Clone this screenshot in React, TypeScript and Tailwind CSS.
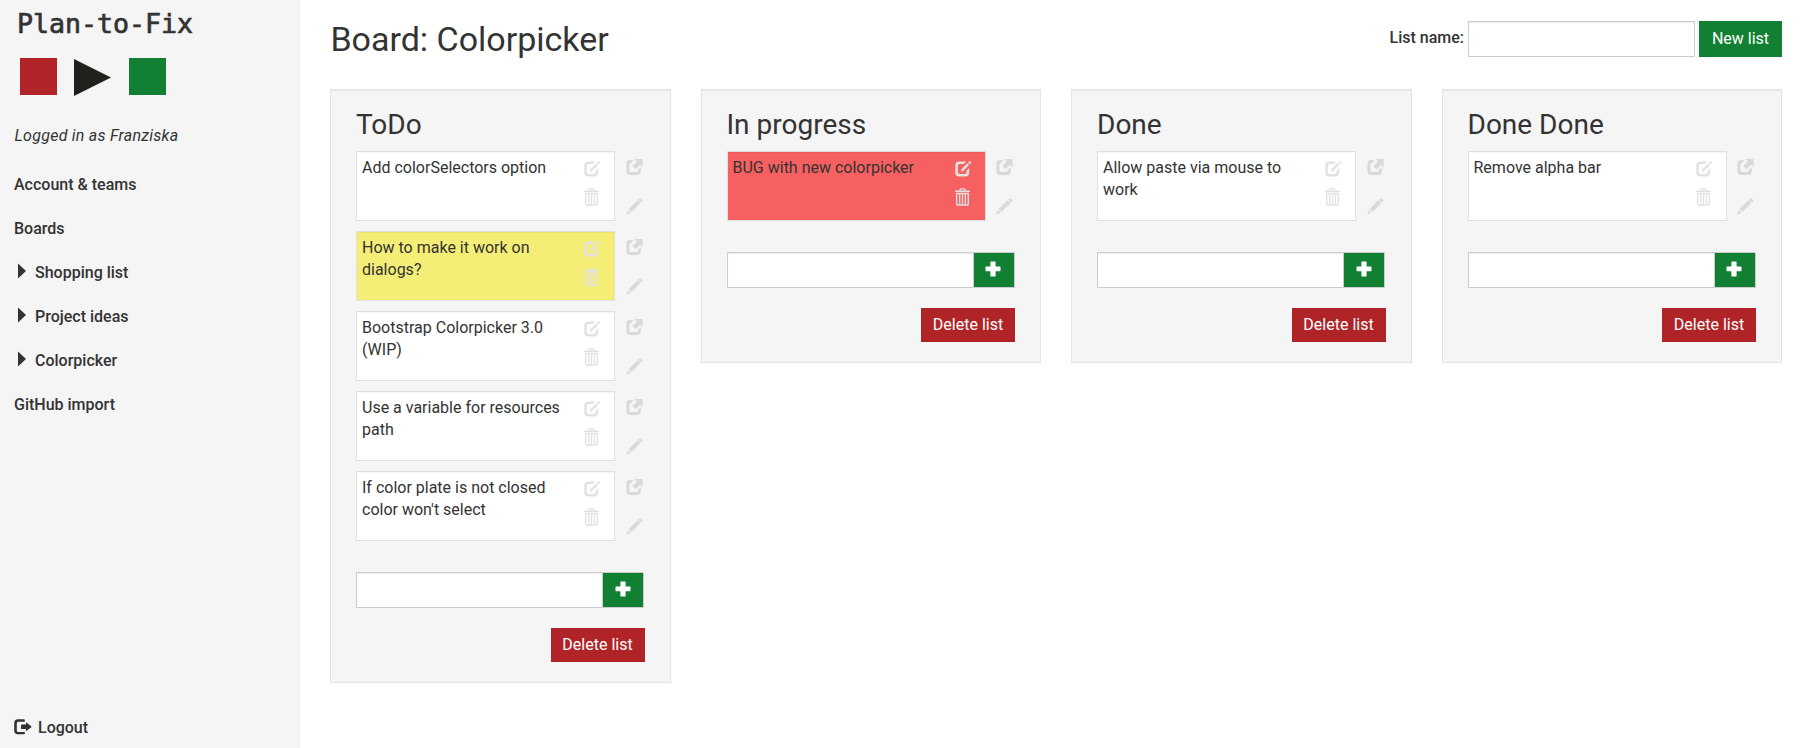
import React from "react";

type Card = { text: string; tone?: "yellow" | "red" };
type List = { title: string; cards: Card[] };

const lists: List[] = [
  {
    title: "ToDo",
    cards: [
      { text: "Add colorSelectors option" },
      { text: "How to make it work on dialogs?", tone: "yellow" },
      { text: "Bootstrap Colorpicker 3.0 (WIP)" },
      { text: "Use a variable for resources path" },
      { text: "If color plate is not closed color won't select" },
    ],
  },
  { title: "In progress", cards: [{ text: "BUG with new colorpicker", tone: "red" }] },
  { title: "Done", cards: [{ text: "Allow paste via mouse to work" }] },
  { title: "Done Done", cards: [{ text: "Remove alpha bar" }] },
];

const tones = {
  plain: "bg-white",
  yellow: "bg-[#f5ee76]",
  red: "bg-[#f66060]",
};

function EditIcon() {
  return (
    <svg width="17" height="16" viewBox="0 0 17 16" fill="currentColor">
      <path d="M4 0.5H11L8.8 3.1H4.8Q2.9 3.1 2.9 5V11Q2.9 12.9 4.8 12.9H9.8Q11.7 12.9 11.7 11V9.6L14.2 7.1V11.7Q14.2 15.4 10.6 15.4H4Q0.3 15.4 0.3 11.7V4.2Q0.3 0.5 4 0.5Z" />
      <path d="M12.2 2.2L14.1 4.1L8.5 9.8L5.7 10.8L6.7 8ZM14.3 0.4Q14.8 0 15.3 0.4L16.1 1.2Q16.5 1.7 16.1 2.2L14.9 3.3L13 1.5Z" />
    </svg>
  );
}

function TrashIcon() {
  return (
    <svg width="15" height="18" viewBox="0 0 15 18" fill="none" stroke="currentColor">
      <path d="M5 2.8V1.5Q5 0.9 5.6 0.9H9.4Q10 0.9 10 1.5V2.8" strokeWidth="1.2" />
      <path d="M0 4V3.3Q0 2.4 1 2.4H14Q15 2.4 15 3.3V4Z" fill="currentColor" stroke="none" />
      <path d="M1.7 5.5H13.3V16.3Q13.3 17 12.6 17H2.4Q1.7 17 1.7 16.3Z" strokeWidth="1.4" />
      <path d="M4.7 6V16.5M7.5 6V16.5M10.3 6V16.5" strokeWidth="1.3" />
    </svg>
  );
}

function ShareIcon() {
  return (
    <svg width="17" height="17" viewBox="0 0 17 17" fill="currentColor">
      <path d="M4.3 1H7.4L5.2 3.9Q3.4 4 3.4 5.8V11.2Q3.4 13 5.2 13H10Q11.8 13 11.8 11.2V10.7L14.8 8.3V12.3Q14.8 16 11.1 16H4.2Q0.4 16 0.4 12.3V4.8Q0.4 1 4.3 1Z" />
      <path d="M8.3 0H16.6V8.2L14.1 5.7L9.5 10.3L6.3 7.1L10.9 2.5Z" />
    </svg>
  );
}

function PencilIcon() {
  return (
    <svg width="17" height="17" viewBox="0 0 17 17" fill="currentColor">
      <path d="M13.3 0.4Q13.9 -0.1 14.5 0.4L16.2 2.1Q16.7 2.7 16.2 3.3L14.9 4.6L12 1.7ZM11.3 2.3L14.3 5.3L5.5 14.1L2.5 11.1ZM1.8 12L4.6 14.8L0.2 16.5Z" />
    </svg>
  );
}

function PlusIcon() {
  return (
    <svg width="16" height="16" viewBox="0 0 16 16" fill="currentColor">
      <path d="M6 .5h4q.6 0 .6.6V5.4h4.3q.6 0 .6.6v3.6q0 .6-.6.6h-4.3v4.7q0 .6-.6.6H6q-.6 0-.6-.6v-4.7H1.100q-.6 0-.6-.6V6q0-.6.6-.6h4.3V1.100q0-.6.6-.6Z" />
    </svg>
  );
}

function LogoutIcon() {
  return (
    <svg width="18" height="16" viewBox="0 0 18 16" fill="currentColor">
      <path d="M4 .2h6q.8 0 .8.8V2.7H4.3q-1.5 0-1.5 1.5v7.2q0 1.5 1.5 1.5h6.500v1.600q0 .8-.8.8H4Q.2 15.300.2 11.500V4Q.2.2 4 .2Z" />
      <path d="M12 3.3L17.3 7.3Q17.7 7.75 17.3 8.2L12 12.2V9.9H7.5Q7 9.9 7 9.4V6.1Q7 5.6 7.5 5.6H12Z" />
    </svg>
  );
}

function TaskCard({ card }: { card: Card }) {
  return (
    <div className="flex h-[70px] justify-between">
      <div
        className={`flex min-w-0 flex-1 justify-between border border-[#e0e0e0] pr-[13px] pl-[5px] shadow-[inset_0_1px_1px_rgba(0,0,0,0.05)] ${tones[card.tone ?? "plain"]}`}
      >
        <p className="w-[202px] pt-[5px] leading-[22px]">{card.text}</p>
        <div className="flex w-[17px] shrink-0 flex-col gap-[11px] pt-[9px] text-[#e2e2e2]">
          <EditIcon />
          <TrashIcon />
        </div>
      </div>
      <div className="flex w-[29.5px] shrink-0 flex-col gap-[22px] pt-2 pl-[10.9px] text-[#d9d9d9]">
        <ShareIcon />
        <PencilIcon />
      </div>
    </div>
  );
}

function Column({ list }: { list: List }) {
  return (
    <section className="border border-[#e3e3e3] bg-[#f5f5f5] px-[25px] pb-5 shadow-[inset_0_1px_1px_rgba(0,0,0,0.05)]">
      <h2 className="pt-[19px] text-[28px] leading-[31px]">{list.title}</h2>
      <div className="mt-[11px] flex flex-col gap-[10px]">
        {list.cards.map((card) => (
          <TaskCard key={card.text} card={card} />
        ))}
      </div>
      <div className="mt-[31px] flex h-9 w-72 border border-[#ccc]">
        <input
          aria-label={list.title}
          className="min-w-0 flex-1 bg-white px-3 shadow-[inset_0_1px_1px_rgba(0,0,0,0.075)] outline-none"
        />
        <button className="flex w-[41px] justify-center border-l border-[#ccc] bg-[#118033] pt-2 pr-px text-white">
          <PlusIcon />
        </button>
      </div>
      <div className="mt-5 flex justify-end">
        <button className="h-[34px] w-[94px] bg-[#b02427] pb-px text-white">Delete list</button>
      </div>
    </section>
  );
}

function Sidebar() {
  return (
    <aside className="flex w-[300px] shrink-0 flex-col border-r border-[#eee] bg-[#f5f5f5]">
      <div className="pt-2 pl-[17px] font-['DejaVu_Sans_Mono',monospace] text-[26.6px] leading-[31px] [-webkit-text-stroke:0.7px_#333]">
        Plan-to-Fix
      </div>
      <div className="mt-[19px] flex pl-5">
        <div className="size-[37px] bg-[#b02427]" />
        <svg className="ml-[17px]" width="37" height="38" viewBox="0 0 37 38">
          <path d="M0 1L37 19.5L0 38Z" fill="#20201c" />
        </svg>
        <div className="ml-[18px] size-[37px] bg-[#118033]" />
      </div>
      <p className="mt-[28px] pl-[14.5px] leading-[23px] tracking-[0.25px] italic">Logged in as Franziska</p>
      <nav className="mt-4 flex flex-col pl-[14px] font-medium">
        <a className="h-11 leading-[44px]">Account &amp; teams</a>
        <a className="h-11 leading-[44px]">Boards</a>
        {["Shopping list", "Project ideas", "Colorpicker"].map((name) => (
          <a key={name} className="flex h-11 pl-1 leading-[44px]">
            <svg className="mt-3 mr-[9px]" width="8" height="16" viewBox="0 0 8 16">
              <path d="M0 .5L8 8L0 15.5Z" fill="#333" />
            </svg>
            {name}
          </a>
        ))}
        <a className="h-11 leading-[44px]">GitHub import</a>
      </nav>
      <a className="mt-auto flex items-start pb-[9px] pl-[14px] leading-[23px] font-medium">
        <span className="mt-[3px] mr-[6px]">
          <LogoutIcon />
        </span>
        Logout
      </a>
    </aside>
  );
}

export default function App() {
  return (
    <div className="flex h-[748px] w-full overflow-hidden bg-white font-['Roboto',sans-serif] text-base text-[#333]">
      <Sidebar />
      <main className="min-w-0 flex-1 pr-6 pl-[30px]">
        <header className="flex h-[89px] justify-between">
          <h1 className="pt-5 pl-[0.4px] text-[34px] leading-[38px]">Board: Colorpicker</h1>
          <form className="flex h-9 items-start pt-[21px]">
            <label htmlFor="list-name" className="mr-1 pt-[5px] leading-[23px] font-medium">
              List name:
            </label>
            <input
              id="list-name"
              className="mr-1 h-9 w-[227px] border border-[#ccc] bg-white px-3 shadow-[inset_0_1px_1px_rgba(0,0,0,0.075)] outline-none"
            />
            <button type="button" className="h-9 w-[83px] bg-[#118033] pb-px text-white">
              New list
            </button>
          </form>
        </header>
        <div className="grid grid-cols-4 items-start gap-[30px]">
          {lists.map((list) => (
            <Column key={list.title} list={list} />
          ))}
        </div>
      </main>
    </div>
  );
}
